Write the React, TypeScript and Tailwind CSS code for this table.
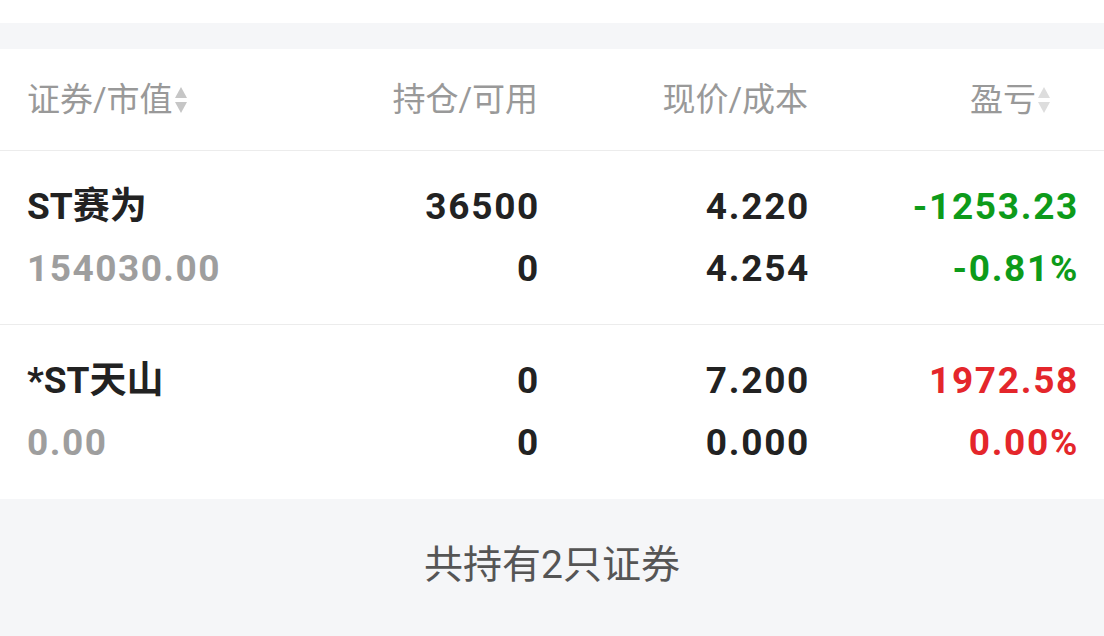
const FONT = { fontFamily: "Roboto, 'Noto Sans CJK SC', sans-serif" };

type Holding = {
  name: string;
  value: string;
  qty: string;
  avail: string;
  price: string;
  cost: string;
  pnl: string;
  pnlPct: string;
  up: boolean;
};

const HOLDINGS: Holding[] = [
  { name: "ST赛为", value: "154030.00", qty: "36500", avail: "0", price: "4.220", cost: "4.254", pnl: "-1253.23", pnlPct: "-0.81%", up: false },
  { name: "*ST天山", value: "0.00", qty: "0", avail: "0", price: "7.200", cost: "0.000", pnl: "1972.58", pnlPct: "0.00%", up: true },
];

function SortIcon({ light }: { light?: boolean }) {
  const c = light ? "#dddddd" : "#c6c6c6";
  return (
    <svg width="14" height="30" viewBox="0 0 14 30" className="ml-[1px]">
      <path d="M7 2 L13 13 L1 13 Z" fill={c} />
      <path d="M1 17 L13 17 L7 28 Z" fill={c} />
    </svg>
  );
}

export default function App() {
  return (
    <div className="w-[1104px] h-[636px] bg-white flex flex-col overflow-hidden" style={FONT}>
      <div className="h-[23px] bg-white" />
      <div className="h-[26px] bg-[#f5f6f8]" />

      {/* header */}
      <div className="h-[102px] grid grid-cols-[1fr_270px_270px_269px] items-center px-[27px] border-b border-[#ececec] text-[33px] text-[#999999]">
        <div className="flex items-center">
          证券/市值
          <SortIcon />
        </div>
        <div className="text-right">持仓/可用</div>
        <div className="text-right">现价/成本</div>
        <div className="flex items-center justify-end pr-[26px]">
          盈亏
          <SortIcon light />
        </div>
      </div>

      {HOLDINGS.map((h, i) => (
        <div
          key={h.name}
          className={
            "h-[174px] grid grid-cols-[1fr_270px_270px_269px] content-center px-[27px] font-bold text-[37px] leading-[62px] " +
            (i === 0 ? "border-b border-[#ececec]" : "")
          }
        >
          <div className="flex flex-col">
            <span className="text-[#222222]">{h.name}</span>
            <span className="text-[#9e9e9e] tracking-[1.5px]">{h.value}</span>
          </div>
          <div className="flex flex-col items-end text-[#222222] tracking-[1.7px] -mr-[2px]">
            <span>{h.qty}</span>
            <span>{h.avail}</span>
          </div>
          <div className="flex flex-col items-end text-[#222222] tracking-[1.7px] -mr-[2px]">
            <span>{h.price}</span>
            <span>{h.cost}</span>
          </div>
          <div
            className={
              "flex flex-col items-end tracking-[1.7px] -mr-[2px] " +
              (h.up ? "text-[#e4262b]" : "text-[#0d9b1a]")
            }
          >
            <span>{h.pnl}</span>
            <span>{h.pnlPct}</span>
          </div>
        </div>
      ))}

      <div className="flex-1 bg-[#f5f6f8] flex items-center justify-center pb-[4px] text-[39px] text-[#555555]">
        共持有2只证券
      </div>
    </div>
  );
}
